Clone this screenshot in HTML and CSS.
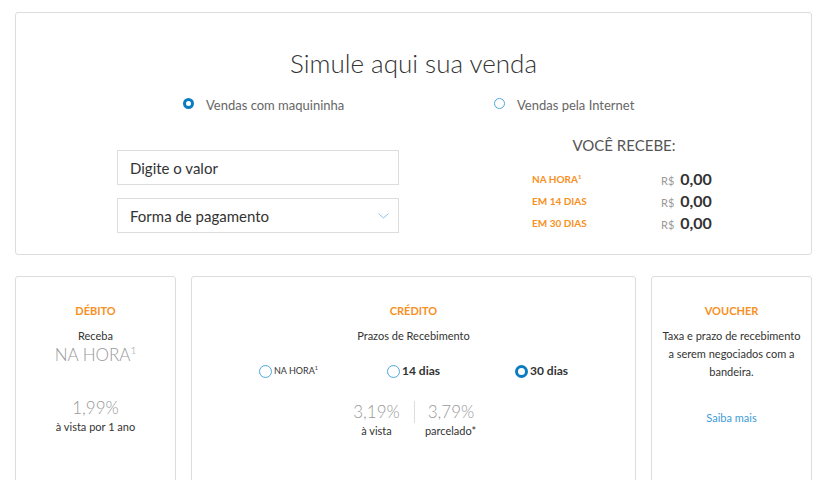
FILE: index.html
```html
<!DOCTYPE html>
<html lang="pt-BR">
<head>
  <meta charset="UTF-8">
  <title>Simule aqui sua venda</title>
  <link rel="stylesheet" href="styles.css">
</head>
<body>
  <div class="page">
    <div class="sim">
      <h1 class="sim-title">Simule aqui sua venda</h1>
      <div class="sale-type">
        <label class="opt"><span class="radio checked"></span>Vendas com maquininha</label>
        <label class="opt"><span class="radio"></span>Vendas pela Internet</label>
      </div>
      <div class="sim-body">
        <div class="form">
          <div class="field">Digite o valor</div>
          <div class="field select">Forma de pagamento
            <svg class="chev" width="11" height="6" viewBox="0 0 11 6"><path d="M0.5 0.5 L5.5 5 L10.5 0.5" fill="none" stroke="#8cc3ea" stroke-width="1"/></svg>
          </div>
        </div>
        <div class="result">
          <div class="result-title">VOCÊ RECEBE:</div>
          <div class="row"><span class="when">NA HORA<sup>1</sup></span><span class="val"><small>R$</small> 0,00</span></div>
          <div class="row"><span class="when">EM 14 DIAS</span><span class="val"><small>R$</small> 0,00</span></div>
          <div class="row"><span class="when">EM 30 DIAS</span><span class="val"><small>R$</small> 0,00</span></div>
        </div>
      </div>
    </div>

    <div class="cards">
      <div class="card">
        <div class="card-title">DÉBITO</div>
        <div class="small">Receba</div>
        <div class="big">NA HORA<sup>1</sup></div>
        <div class="rate">1,99%</div>
        <div class="small tight">à vista por 1 ano</div>
      </div>
      <div class="card">
        <div class="card-title">CRÉDITO</div>
        <div class="small">Prazos de Recebimento</div>
        <div class="terms">
          <span class="term"><span class="radio"></span><span class="term-caps">NA HORA<sup>1</sup></span></span>
          <span class="term"><span class="radio"></span>14 dias</span>
          <span class="term"><span class="radio checked"></span>30 dias</span>
        </div>
        <div class="rates">
          <div class="rate-col">
            <div class="rate">3,19%</div>
            <div class="small tight">à vista</div>
          </div>
          <div class="rate-col">
            <div class="rate">3,79%</div>
            <div class="small tight">parcelado*</div>
          </div>
        </div>
      </div>
      <div class="card voucher">
        <div class="card-title">VOUCHER</div>
        <div class="small">Taxa e prazo de recebimento<br>a serem negociados com a<br>bandeira.</div>
        <a class="more" href="#">Saiba mais</a>
      </div>
    </div>
  </div>
</body>
</html>
```

FILE: styles.css
```css
body {
  margin: 0;
  font-family: Lato, "Open Sans", Arial, sans-serif;
  background-color: #fff;
  color: #333;
}
.page {
  width: 797px;
  margin-left: 15px;
  padding-top: 12px;
}
.sim {
  border: 1px solid #ddd;
  border-radius: 3px;
  padding: 35px 0 20px;
}
.sim-title {
  margin: 0;
  text-align: center;
  font-size: 26px;
  line-height: 30px;
  font-weight: 300;
  color: #333;
}
.sale-type {
  display: grid;
  grid-template-columns: 311px auto;
  padding-left: 167px;
  margin-top: 17px;
  font-size: 13px;
  line-height: 20px;
  color: #666;
}
.opt {
  display: flex;
  align-items: center;
  gap: 12px;
}
.radio {
  display: inline-block;
  box-sizing: border-box;
  width: 11px;
  height: 11px;
  border-radius: 50%;
  border: 1px solid #4da6df;
  background-color: #fff;
}
.radio.checked {
  border: 3px solid #0b7cc1;
}
.sale-type .radio {
  position: relative;
  top: -2px;
}
.sim-body {
  display: flex;
  margin-top: 20px;
  padding-left: 101px;
}
.form {
  width: 282px;
  padding-top: 15px;
  display: flex;
  flex-direction: column;
  gap: 13px;
}
.field {
  box-sizing: border-box;
  height: 35px;
  border: 1px solid #ddd;
  padding: 0 12px;
  display: flex;
  align-items: center;
  font-size: 15px;
  color: #333;
}
.select {
  justify-content: space-between;
  padding-right: 9px;
}
.result {
  width: 190px;
  margin-left: 133px;
}
.result-title {
  width: 180px;
  text-align: center;
  font-size: 15px;
  line-height: 20px;
  color: #555;
  padding-left: 2px;
}
.result-title + .row {
  margin-top: 13px;
}
.row {
  display: grid;
  grid-template-columns: 129px auto;
  line-height: 22px;
  height: 22px;
  white-space: nowrap;
}
.when {
  color: #f7901e;
  font-size: 10px;
  font-weight: 700;
}
.when sup, .big sup, .term-caps sup {
  font-size: 0.6em;
  line-height: 0;
}
.val {
  font-size: 16px;
  font-weight: 700;
  color: #333;
}
.val small {
  font-size: 11px;
  font-weight: 400;
  color: #999;
  margin-right: 2px;
}
.cards {
  display: grid;
  grid-template-columns: 161px 445px 161px;
  gap: 15px;
  margin-top: 21px;
}
.card {
  box-sizing: border-box;
  height: 230px;
  border: 1px solid #ddd;
  border-radius: 3px;
  padding-top: 27px;
  text-align: center;
}
.card-title {
  color: #f7901e;
  font-size: 11px;
  font-weight: 700;
  line-height: 14px;
}
.small {
  margin-top: 9px;
  font-size: 11px;
  line-height: 18px;
  color: #333;
}
.small.tight {
  margin-top: 1px;
  line-height: 14px;
}
.big {
  font-size: 17px;
  line-height: 20px;
  font-weight: 300;
  color: #999;
}
.card > .rate {
  margin-top: 32px;
}
.rate {
  font-size: 17px;
  line-height: 22px;
  font-weight: 300;
  color: #999;
}
.terms {
  display: grid;
  grid-template-columns: 128px 128px 128px;
  padding-left: 67px;
  margin-top: 17px;
  text-align: left;
  font-size: 12px;
  line-height: 18px;
  font-weight: 700;
  color: #333;
}
.term {
  display: flex;
  align-items: center;
  gap: 2px;
}
.term .radio {
  width: 13px;
  height: 13px;
}
.term-caps {
  font-size: 9px;
  font-weight: 400;
}
.rates {
  display: flex;
  justify-content: center;
  margin-top: 21px;
}
.rate-col {
  width: 74px;
}
.rate-col + .rate-col .rate {
  border-left: 1px solid #ddd;
}
.voucher .small {
  padding: 0 4px;
  white-space: nowrap;
}
.more {
  display: block;
  margin-top: 30px;
  font-size: 11px;
  color: #3c9bd7;
  text-decoration: none;
}
```
